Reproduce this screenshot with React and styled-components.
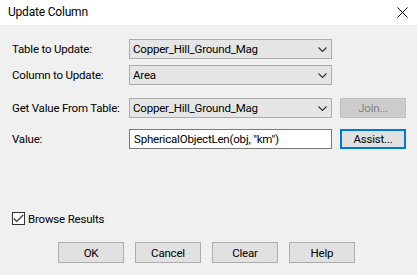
import * as React from 'react';
import styled, { createGlobalStyle } from 'styled-components';

const GlobalStyle = createGlobalStyle`
    html, body {
        margin: 0;
        padding: 0;
        background: #f0f0f0;
    }

    * {
        box-sizing: border-box;
    }
`

const StyledWindow = styled.div`
    width: 417px;
    height: 275px;
    display: flex;
    flex-direction: column;
    font-family: Roboto, "Liberation Sans", sans-serif;
    font-size: 11.5px;
    letter-spacing: -0.2px;
    color: #000;
    overflow: hidden;
    white-space: nowrap;
`

const StyledTitleBar = styled.div`
    height: 25px;
    background: #fff;
    display: flex;
    align-items: center;
    justify-content: space-between;
    padding: 0 9px 1px 8px;

    .title {
        font-size: 12px;
    }
`

const StyledBody = styled.div`
    flex: 1;
    background: #f0f0f0;
    display: flex;
    flex-direction: column;
    padding: 14px 0 0 12px;
`

const StyledRow = styled.div`
    display: flex;
    align-items: center;
    height: 20px;
    margin-top: ${props => props.$gap || 0}px;
`

const StyledLabel = styled.label`
    width: 117px;
    flex-shrink: 0;
`

const StyledCombo = styled.div`
    width: 203px;
    height: 20px;
    background: #e5e5e5;
    border: 1px solid #acacac;
    display: flex;
    align-items: center;
    justify-content: space-between;
    padding: 0 4px 0 3px;

    svg {
        display: block;
    }
`

const StyledTextBox = styled.div`
    width: 203px;
    height: 20px;
    background: #fff;
    border: 1px solid #7a7a7a;
    display: flex;
    align-items: center;
    padding-left: 4px;
`

const StyledButton = styled.button`
    width: 66px;
    height: ${props => props.$height || 20}px;
    margin-left: ${props => props.$offset || 0}px;
    font: inherit;
    letter-spacing: inherit;
    padding: 0;
    background: ${props => props.disabled ? '#cccccc' : '#e1e1e1'};
    color: ${props => props.disabled ? '#838383' : '#000'};
    border: ${props => props.$focused ? '2px solid #0078d7' : props.disabled ? '1px solid #bfbfbf' : '1px solid #adadad'};
    display: flex;
    align-items: center;
    justify-content: center;
`

const StyledCheckRow = styled.div`
    display: flex;
    align-items: center;
    margin-top: 63px;
    height: 13px;
    gap: 3px;
`

const StyledCheckBox = styled.span`
    width: 13px;
    height: 13px;
    border: 1px solid #333;
    background: #fff;
    display: flex;
    align-items: center;
    justify-content: center;
`

const StyledButtonRow = styled.div`
    display: flex;
    gap: 11px;
    margin-top: 17px;
    padding-left: 46px;
`

const Chevron = () => (
    <svg width="9" height="5" viewBox="0 0 9 5">
        <path d="M0.5 0.5 L4.5 4.5 L8.5 0.5" fill="none" stroke="#333" strokeWidth="1.1" />
    </svg>
)

const Combo = ({ value }) => (
    <StyledCombo>
        <span>{value}</span>
        <Chevron />
    </StyledCombo>
)

const App = () => {
    const rows = [
        { label: 'Table to Update:', value: 'Copper_Hill_Ground_Mag', gap: 0 },
        { label: 'Column to Update:', value: 'Area', gap: 6 },
    ];

    return (
        <StyledWindow>
            <GlobalStyle />
            <StyledTitleBar>
                <span className='title'>Update Column</span>
                <svg width="11" height="11" viewBox="0 0 11 11">
                    <path d="M0.5 0.5 L10.5 10.5 M10.5 0.5 L0.5 10.5" stroke="#000" strokeWidth="1" />
                </svg>
            </StyledTitleBar>
            <StyledBody>
                {rows.map(({ label, value, gap }, i) => (
                    <StyledRow key={i} $gap={gap}>
                        <StyledLabel>{label}</StyledLabel>
                        <Combo value={value} />
                    </StyledRow>
                ))}
                <StyledRow $gap={13}>
                    <StyledLabel>Get Value From Table:</StyledLabel>
                    <Combo value='Copper_Hill_Ground_Mag' />
                    <StyledButton disabled $offset={8} $height={20}>Join...</StyledButton>
                </StyledRow>
                <StyledRow $gap={11}>
                    <StyledLabel>Value:</StyledLabel>
                    <StyledTextBox>SphericalObjectLen(obj, "km")</StyledTextBox>
                    <StyledButton $focused $offset={8}>Assist...</StyledButton>
                </StyledRow>
                <StyledCheckRow>
                    <StyledCheckBox>
                        <svg width="11" height="9" viewBox="0 0 11 9">
                            <path d="M0.8 4.5 L3.8 7.5 L10.2 1" fill="none" stroke="#333" strokeWidth="1.2" />
                        </svg>
                    </StyledCheckBox>
                    <span>Browse Results</span>
                </StyledCheckRow>
                <StyledButtonRow>
                    {['OK', 'Cancel', 'Clear', 'Help'].map(name => (
                        <StyledButton key={name} $height={21}>{name}</StyledButton>
                    ))}
                </StyledButtonRow>
            </StyledBody>
        </StyledWindow>
    )
};

export default App;
